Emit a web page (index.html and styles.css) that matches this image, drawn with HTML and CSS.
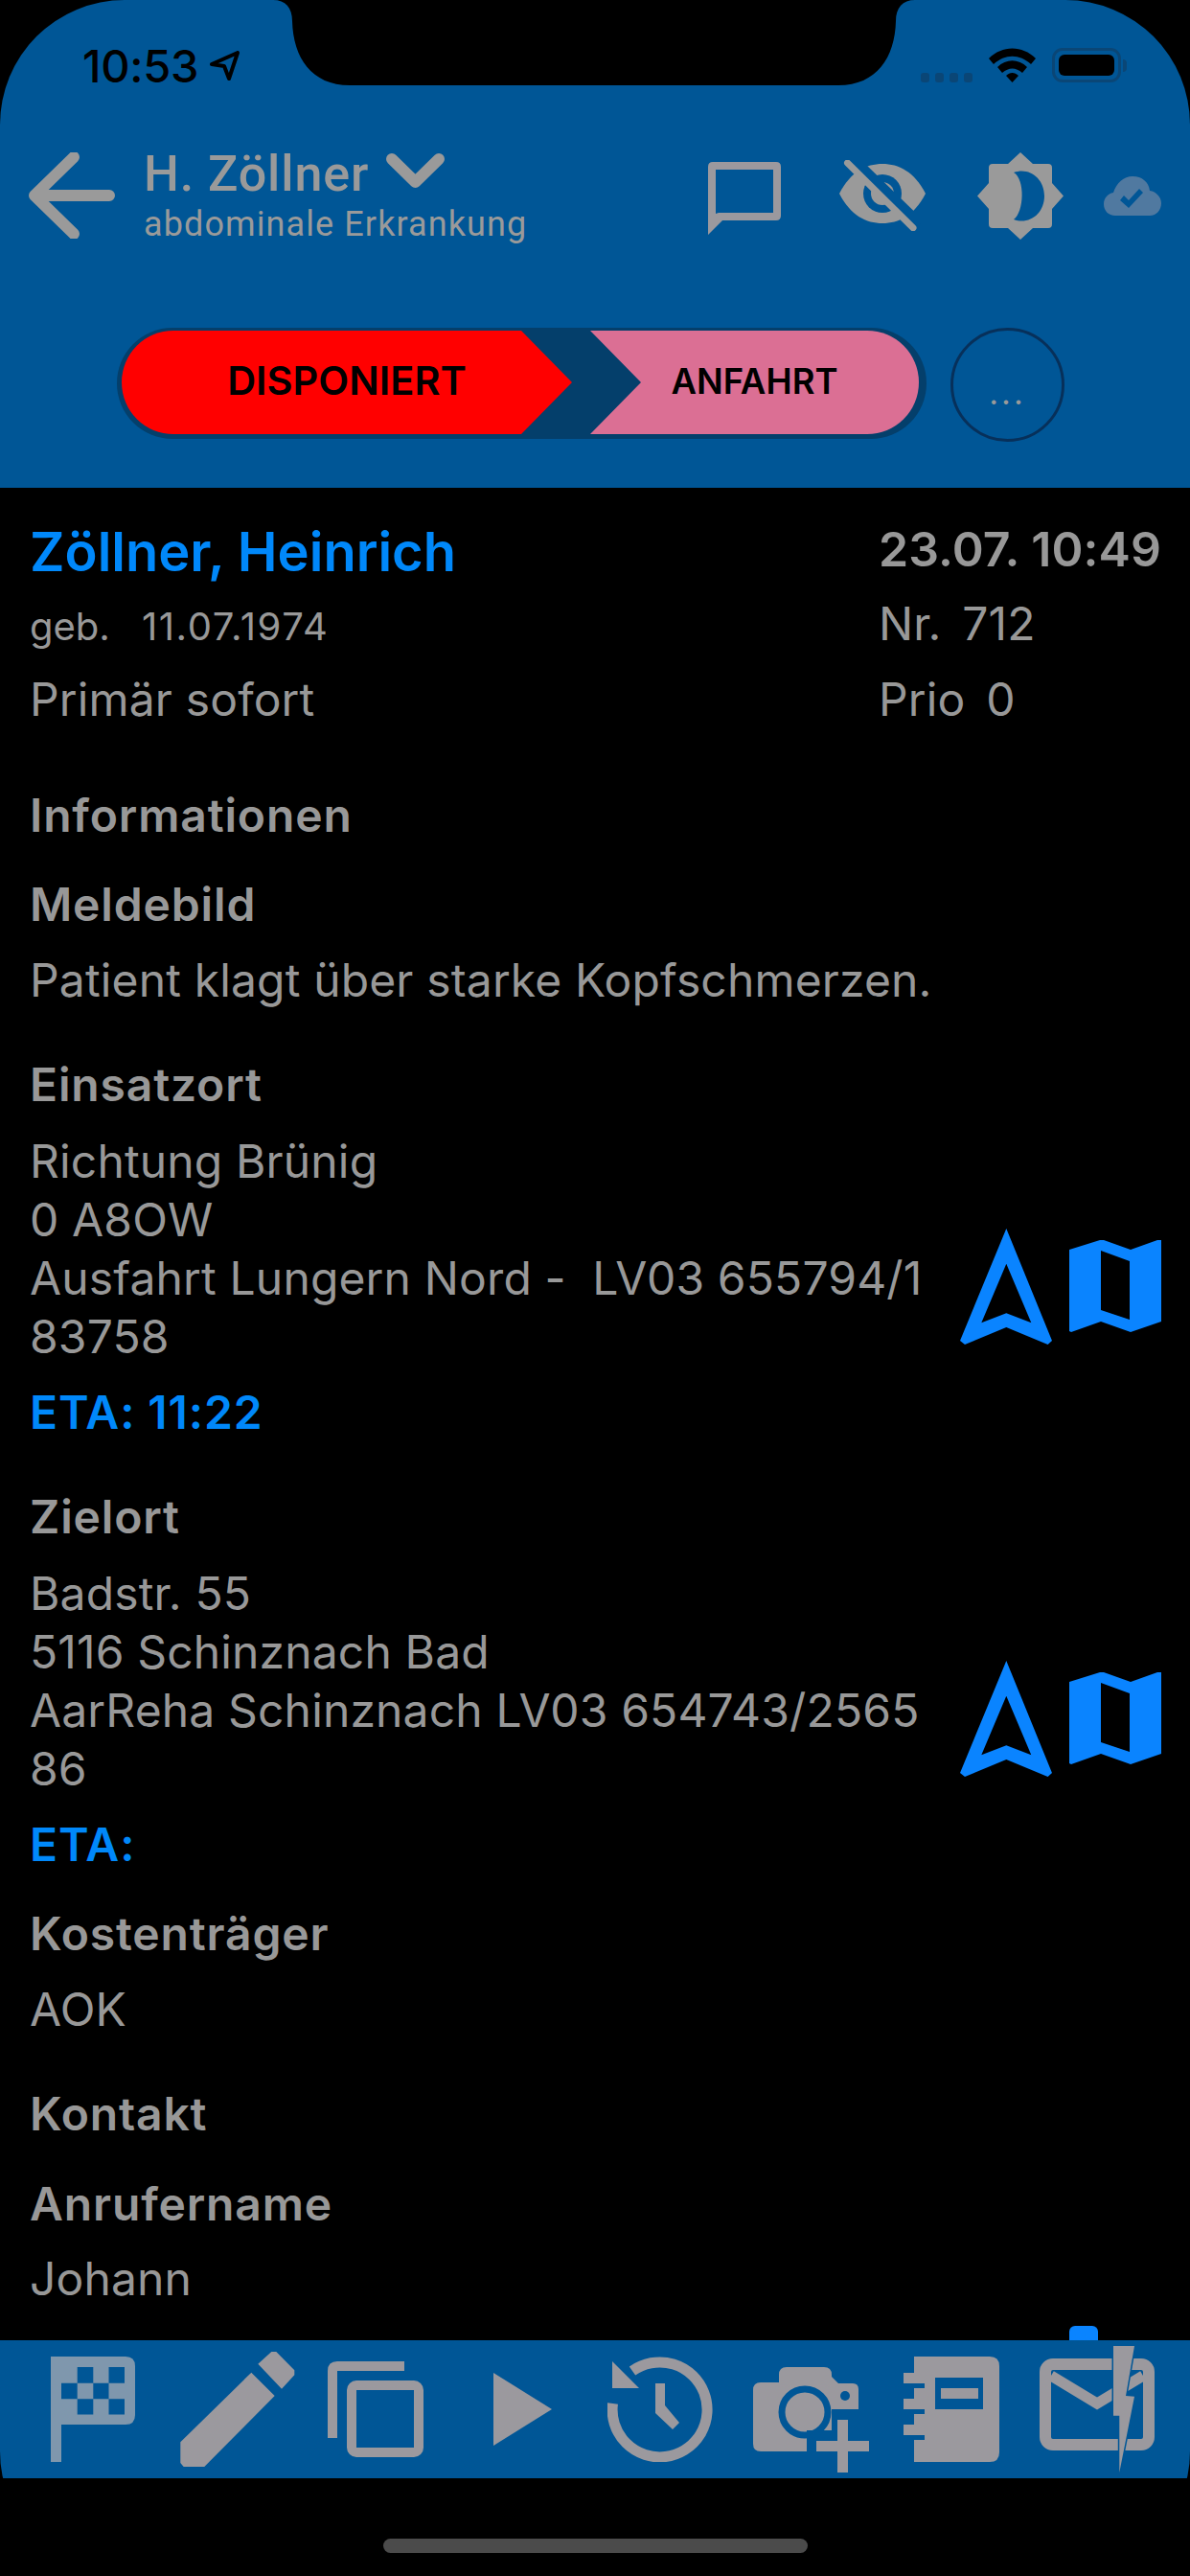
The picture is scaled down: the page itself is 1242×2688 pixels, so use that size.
FILE: index.html
```html
<!DOCTYPE html>
<html lang="de">
<head>
<meta charset="UTF-8" />
<meta name="viewport" content="width=device-width, initial-scale=1" />
<title>Einsatz 712</title>
<link rel="stylesheet" href="styles.css">
</head>
<body>
<div class="screen">

  <header class="kopf">
    <!-- Notch liegt ueber der Statusleiste -->
    <svg class="notch" width="1242" height="89" viewBox="0 0 1242 89"><path d="M285 0C298 0 305 8 305 22C306 60 325 89 365 89H875C915 89 934 60 935 22C935 8 942 0 955 0Z"/></svg>

    <div class="status">
      <div class="uhr">
        <span>10:53</span>
        <svg width="32" height="31" viewBox="0 0 32 31"><path d="M2 14L29 2L20 29L15 16Z" fill="none" stroke="#000" stroke-width="4" stroke-linejoin="round"/></svg>
      </div>
      <div class="status-rechts">
        <div class="balken"><i></i><i></i><i></i><i></i></div>
        <svg class="wifi" width="49" height="36" viewBox="0 0 49 36">
          <path d="M0 11C14 -3 35 -3 49 11L44 17C32 6 17 6 5 17Z"/>
          <path d="M9 20C18 11 31 11 40 20L35 26C28 20 21 20 14 26Z"/>
          <path d="M18 29C22 25 27 25 31 29L24.500 36Z"/>
        </svg>
        <div class="akku"><div class="akku-innen"></div></div>
      </div>
    </div>

    <div class="titelzeile">
      <svg class="zurueck" width="90" height="90" viewBox="0 0 90 90"><path d="M84 45H6M47 5L6 45L47 85" fill="none" stroke="#9a9a9a" stroke-width="12" stroke-linecap="round" stroke-linejoin="round"/></svg>
      <div class="titel">
        <div class="titel-name">
          <span>H. Zöllner</span>
          <svg width="61" height="36" viewBox="0 0 61 36"><path d="M6 6L30.500 30L55 6" fill="none" stroke="#9a9a9a" stroke-width="12" stroke-linecap="round" stroke-linejoin="round"/></svg>
        </div>
        <div class="titel-sub">abdominale Erkrankung</div>
      </div>
      <div class="kopf-icons">
        <svg class="ic-chat" width="76" height="76" viewBox="0 0 76 76"><path fill-rule="evenodd" d="M5 0H71Q76 0 76 5V56Q76 61 71 61H15L0 76V5Q0 0 5 0ZM8 8V54L11 53H68V8Z" fill="#9b999e"/></svg>
        <svg class="ic-auge" width="90" height="74" viewBox="0 0 90 74">
          <path d="M0 35C12 12 28 4 45 4C62 4 78 12 90 35C78 58 62 66 45 66C28 66 12 58 0 35Z" fill="#9a9a9a"/>
          <circle cx="45" cy="35" r="20" fill="#005696"/>
          <circle cx="45" cy="35" r="12" fill="#9a9a9a"/>
          <path d="M14 -1L84 67" stroke="#005696" stroke-width="11"/>
          <path d="M8.500 3L77 70.700" stroke="#9a9a9a" stroke-width="7" stroke-linecap="round"/>
        </svg>
        <svg class="ic-hell" width="90" height="91" viewBox="0 0 90 91"><path fill-rule="evenodd" d="M45 0L58 12H74Q78 12 78 16V32L90 45.500L78 59V75Q78 79 74 79H58L45 91L32 79H16Q12 79 12 75V59L0 45.500L12 32V16Q12 12 16 12H32ZM38 21C50 28 49 62 38 70C54 76 70 64 70 45.500C70 27 54 15 38 21Z" fill="#9a9a9a"/></svg>
        <svg class="ic-wolke" width="60" height="41" viewBox="0 0 60 41"><path fill-rule="evenodd" d="M12 41C5 41 0 36 0 29C0 23 4 18 10 17C13 7 21 0 30 0C40 0 47 6 48 15C55 16 60 22 60 28C60 35 55 41 48 41ZM17 25L26 33L41 17L37 13L26 25L21 20Z" fill="#5079a0"/></svg>
      </div>
    </div>

    <div class="statuszeile">
      <div class="pille">
        <div class="pille-innen">
          <div class="schritt schritt-aktiv">DISPONIERT</div>
          <div class="schritt schritt-naechster">ANFAHRT</div>
        </div>
      </div>
      <div class="mehr">...</div>
    </div>
  </header>

  <main class="inhalt">
    <div class="patient">
      <div>
        <div class="patient-name">Zöllner, Heinrich</div>
        <div class="patient-geb"><span>geb.</span><span class="geb-datum">11.07.1974</span></div>
        <div class="zeile">Primär sofort</div>
      </div>
      <div class="patient-rechts">
        <div class="patient-zeit">23.07. 10:49</div>
        <div class="zeile wort-weit">Nr. 712</div>
        <div class="zeile wort-weit">Prio 0</div>
      </div>
    </div>

    <div class="gruppe">Informationen</div>
    <div class="label label-eng">Meldebild</div>
    <div class="zeile">Patient klagt über starke Kopfschmerzen.</div>

    <div class="label">Einsatzort</div>
    <div class="ort">
      <div class="ort-text">
        <div class="zeile">Richtung Brünig<br>0 A8OW<br>Ausfahrt Lungern Nord -&nbsp; LV03 655794/1<br>83758</div>
        <div class="eta">ETA: 11:22</div>
      </div>
      <svg class="ic-nav" width="96" height="121" viewBox="0 0 96 121"><path fill-rule="evenodd" d="M48.300 0L96 117L91.600 121L48.300 103L5 121L0 117ZM48.300 36.700L22.300 98.300L48.300 88.300L74.300 98.300Z"/></svg>
      <svg class="ic-karte" width="96" height="96" viewBox="0 0 96 96"><path fill-rule="evenodd" d="M0 10L32 0H36L64 10L92 0H96V85L64 96L33 85L2 96L0 95ZM33 11V73L63 83V22Z"/></svg>
    </div>

    <div class="label">Zielort</div>
    <div class="ort">
      <div class="ort-text">
        <div class="zeile">Badstr. 55<br>5116 Schinznach Bad<br>AarReha Schinznach LV03 654743/2565<br>86</div>
        <div class="eta">ETA:</div>
      </div>
      <svg class="ic-nav" width="96" height="121" viewBox="0 0 96 121"><path fill-rule="evenodd" d="M48.300 0L96 117L91.600 121L48.300 103L5 121L0 117ZM48.300 36.700L22.300 98.300L48.300 88.300L74.300 98.300Z"/></svg>
      <svg class="ic-karte" width="96" height="96" viewBox="0 0 96 96"><path fill-rule="evenodd" d="M0 10L32 0H36L64 10L92 0H96V85L64 96L33 85L2 96L0 95ZM33 11V73L63 83V22Z"/></svg>
    </div>

    <div class="label label-eng">Kostenträger</div>
    <div class="zeile">AOK</div>

    <div class="label">Kontakt</div>
    <div class="label label-eng">Anrufername</div>
    <div class="zeile">Johann</div>
  </main>

  <nav class="leiste">
    <div class="reiter"></div>
    <svg class="b-flagge" width="88" height="110" viewBox="0 0 88 110"><path fill-rule="evenodd" d="M0 0H78Q88 0 88 10V61Q88 71 78 71H11V110H0ZM27.700 11V27.700H44.300V11ZM60.500 11V27.700H77V11ZM11 27.700V44.300H27.700V27.700ZM44.300 27.700V44.300H60.500V27.700ZM27.700 44.300V60.500H44.300V44.300ZM60.500 44.300V60.500H77V44.300Z" fill="#7f97ad"/></svg>
    <svg class="b-stift" width="120" height="120" viewBox="0 0 120 120"><path d="M0.300 94.300L74.300 21.700L98.700 46L25.300 120H3.700L0.300 116ZM81.300 12.700L95.300 0H100.300L119.300 19.300V24.300L106 38.700Z"/></svg>
    <svg class="b-kopie" width="100" height="100" viewBox="0 0 100 100"><path d="M10 80H0V10Q0 0 10 0H80V10H10Z"/><rect x="25" y="25" width="70" height="70" rx="5" fill="none" stroke="#9b999e" stroke-width="10"/></svg>
    <svg class="b-play" width="61" height="76" viewBox="0 0 61 76"><path d="M0 0L61 38L0 76Z"/></svg>
    <svg class="b-verlauf" width="110" height="110" viewBox="0 0 110 110">
      <path d="M5.500 49A49.500 49.500 0 1 0 26 15" fill="none" stroke="#9b999e" stroke-width="11"/>
      <path d="M5 5L33 33H5Z"/>
      <path d="M50 28H60V51L75 69L68 76L50 59Z"/>
    </svg>
    <svg class="b-kamera" width="121" height="110" viewBox="0 0 121 110">
      <path d="M0 24Q0 16 8 16H27V8Q27 0 35 0H74Q82 0 82 8V10L89 17H104Q110 17 110 23V44H82V66H56V88H8Q0 88 0 80Z"/>
      <circle cx="54" cy="47" r="24" stroke="#005696" stroke-width="7"/>
      <rect x="56" y="66" width="65" height="22" fill="#005696"/>
      <circle cx="96" cy="30" r="5" fill="#005696"/>
      <path d="M88 55H99V77H121V88H99V110H88V88H66V77H88Z"/>
    </svg>
    <svg class="b-buch" width="100" height="110" viewBox="0 0 100 110">
      <path d="M11 0H90Q100 0 100 10V100Q100 110 90 110H11V87H22V82H0V71H11V60H22V55H0V44H11V33H22V28H0V17H11Z"/>
      <rect x="33" y="22" width="50" height="33" fill="#005696"/>
      <rect x="39" y="33" width="39" height="11"/>
    </svg>
    <svg class="b-mail" width="120" height="132" viewBox="0 0 120 132">
      <rect x="6" y="19" width="108" height="84" rx="8" fill="none" stroke="#9b999e" stroke-width="12"/>
      <path d="M12 31L60 60L108 31" fill="none" stroke="#9b999e" stroke-width="11"/>
      <path d="M77 0H99L90 52L99 52.700L83.300 132V72.700H77Z" stroke="#005696" stroke-width="3" paint-order="stroke"/>
    </svg>
  </nav>

  <div class="home"><div class="home-balken"></div></div>
</div>
</body>
</html>
```

FILE: styles.css
```css
* { box-sizing: border-box; }
html, body { margin: 0; background: #000; }
body { width: 1242px; height: 2688px; overflow: hidden; font-family: "Inter", "Liberation Sans", sans-serif; color: #989898; }

.screen {
  width: 1242px;
  height: 2688px;
  display: flex;
  flex-direction: column;
  overflow: hidden;
  border-radius: 130px;
  background: #000;
}

/* Kopfbereich */
.kopf {
  position: relative;
  height: 509px;
  flex: none;
  background: #005696;
}
.notch { position: absolute; top: 0; left: 0; fill: #000; }

.status {
  height: 136px;
  display: flex;
  justify-content: space-between;
  align-items: center;
  padding: 0 72px 0 86px;
}
.uhr { display: flex; align-items: center; gap: 12px; color: #000; font-size: 47px; font-weight: 500; letter-spacing: -0.3px; }
.status-rechts { display: flex; align-items: flex-end; }
.balken { display: flex; gap: 6px; margin-right: 17px; }
.balken i { width: 9px; height: 10px; border-radius: 3px; background: #0a4676; }
.wifi { fill: #000; margin-right: 17px; }
.akku {
  position: relative;
  width: 72px;
  height: 36px;
  padding: 4px;
  border: 3px solid #0a4676;
  border-radius: 11px;
}
.akku::after {
  content: "";
  position: absolute;
  top: 9px;
  right: -9px;
  width: 4px;
  height: 13px;
  border-radius: 0 6px 6px 0;
  background: #0a4676;
}
.akku-innen { height: 100%; border-radius: 6px; background: #000; }

.titelzeile {
  height: 136px;
  display: flex;
  align-items: center;
  padding-left: 30px;
}
.zurueck { flex: none; margin-right: 30px; }
.titel { width: 589px; }
.titel-name { display: flex; align-items: center; gap: 18px; height: 56px; font-family: "Roboto", sans-serif; font-size: 52px; font-weight: 500; letter-spacing: 0.9px; color: #9a9a9a; }
.titel-name svg { margin-top: -8px; }
.titel-sub { margin-top: 3px; font-family: "Roboto", sans-serif; font-size: 36px; letter-spacing: 1.1px; color: #9a9a9a; }
.kopf-icons { display: flex; align-items: center; }
.ic-chat { margin-top: 6px; margin-right: 61px; }
.ic-auge { margin-right: 54px; }
.ic-hell { margin-right: 42px; }

.statuszeile { display: flex; align-items: flex-start; gap: 25px; padding: 70px 0 0 122px; }
.pille {
  width: 845px;
  height: 116px;
  padding: 3px 8px 5px 5px;
  border-radius: 58px;
  background: #043f6b;
}
.pille-innen { display: flex; justify-content: space-between; height: 100%; overflow: hidden; border-radius: 54px; }
.schritt { display: flex; align-items: center; justify-content: center; color: #000; font-weight: 600; }
.schritt-aktiv {
  width: 470px;
  padding-bottom: 4px;
  background: #f00;
  font-size: 41.500px;
  clip-path: polygon(0 0, 417px 0, 100% 50%, 417px 100%, 0 100%);
}
.schritt-naechster {
  width: 343px;
  padding-bottom: 3px;
  background: #db6f94;
  font-size: 36.500px;
  clip-path: polygon(0 0, 100% 0, 100% 100%, 0 100%, 53px 50%);
}
.mehr {
  width: 119px;
  height: 119px;
  padding-top: 44px;
  border: 3px solid #07305a;
  border-radius: 50%;
  text-align: center;
  font-size: 34px;
  letter-spacing: 3px;
  color: #9a9a9a;
}

/* Inhalt */
.inhalt {
  flex: 1;
  overflow: hidden;
  padding: 0 31px;
  font-size: 48px;
  letter-spacing: 0.15px;
  line-height: 60.500px;
}
.patient { display: flex; justify-content: space-between; padding-top: 36px; }
.patient-name { font-size: 56px; font-weight: 600; line-height: 62px; color: #0088fa; letter-spacing: 0; }
.patient-geb { display: flex; gap: 33px; margin-top: 17px; font-size: 40px; line-height: 60px; letter-spacing: 0; }
.geb-datum { letter-spacing: 1.6px; }
.patient-geb + .zeile { margin-top: 16px; }
.patient-rechts { width: 294px; }
.patient-zeit { font-size: 50px; font-weight: 600; line-height: 56px; margin-bottom: 20px; white-space: nowrap; letter-spacing: 0.1px; }
.patient-rechts .zeile + .zeile { margin-top: 18px; }
.wort-weit { word-spacing: 8px; }
.zeile { white-space: nowrap; }

.gruppe, .label { font-weight: 600; letter-spacing: 0.85px; color: #989898; }
.gruppe { margin-top: 60px; }
.label { margin-top: 49px; margin-bottom: 18px; }
.label-eng { margin-top: 33px; }
.eta { margin-top: 19px; font-weight: 600; letter-spacing: 0.9px; color: #0088fa; }

.ort { display: flex; align-items: center; }
.ort .zeile { line-height: 61px; }
.ort-text { width: 971px; flex: none; }
.ic-nav { fill: #0a84ff; flex: none; }
.ic-karte { fill: #0a84ff; margin-left: 18px; flex: none; }

/* Werkzeugleiste unten */
.leiste { position: relative; height: 144px; flex: none; background: #005696; }
.leiste svg { position: absolute; fill: #9b999e; }
.reiter { position: absolute; top: -15px; left: 1116px; width: 30px; height: 15px; border-radius: 6px 6px 0 0; background: #0a84ff; }
.b-flagge { left: 53px; top: 17px; }
.b-stift { left: 188px; top: 12px; }
.b-kopie { left: 342px; top: 22px; }
.b-play { left: 515px; top: 34px; }
.b-verlauf { left: 634px; top: 17px; }
.b-kamera { left: 786px; top: 28px; }
.b-buch { left: 943px; top: 17px; }
.b-mail { left: 1085px; top: 6px; }

.home { height: 102px; flex: none; padding-top: 63px; }
.home-balken { width: 443px; height: 15px; margin: 0 auto; border-radius: 8px; background: #4b4b4b; }
```
